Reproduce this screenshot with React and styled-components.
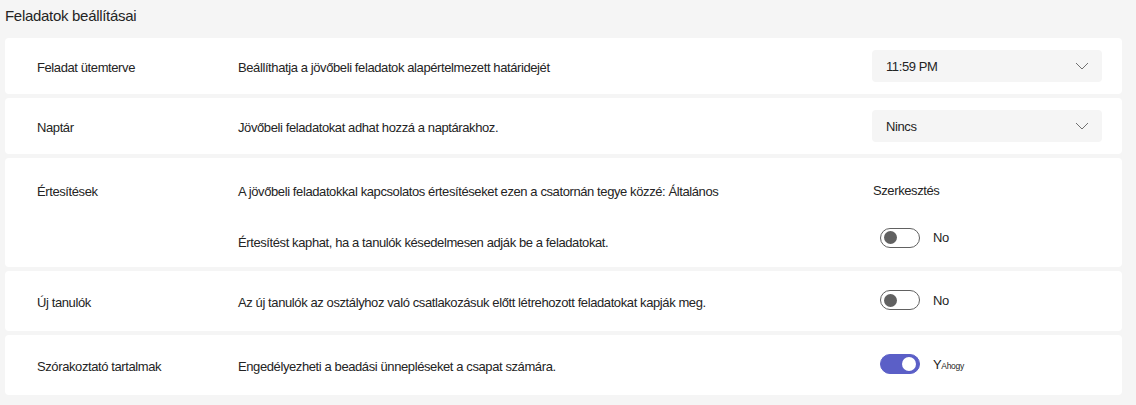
import React from 'react'
import styled, { createGlobalStyle } from 'styled-components'

const settings = [
  {
    label: 'Feladat ütemterve',
    rows: [{ text: 'Beállíthatja a jövőbeli feladatok alapértelmezett határidejét', control: { type: 'select', value: '11:59 PM' } }],
    height: 56,
  },
  {
    label: 'Naptár',
    rows: [{ text: 'Jövőbeli feladatokat adhat hozzá a naptárakhoz.', control: { type: 'select', value: 'Nincs' } }],
    height: 56,
  },
  {
    label: 'Értesítések',
    rows: [
      { text: 'A jövőbeli feladatokkal kapcsolatos értesítéseket ezen a csatornán tegye közzé: Általános', control: { type: 'link', value: 'Szerkesztés' } },
      { text: 'Értesítést kaphat, ha a tanulók késedelmesen adják be a feladatokat.', control: { type: 'toggle', on: false }, lift: 4 },
    ],
    height: 51,
    padTop: 7,
  },
  {
    label: 'Új tanulók',
    rows: [{ text: 'Az új tanulók az osztályhoz való csatlakozásuk előtt létrehozott feladatokat kapják meg.', control: { type: 'toggle', on: false }, lift: 1 }],
    height: 60,
  },
  {
    label: 'Szórakoztató tartalmak',
    rows: [{ text: 'Engedélyezheti a beadási ünnepléseket a csapat számára.', control: { type: 'toggle', on: true }, lift: 1 }],
    height: 60,
  },
]

function App() {
  return (
    <>
      <GlobalStyle />
      <Page>
        <Title>Feladatok beállításai</Title>
        <List>
          {settings.map((s) => (
            <Card key={s.label} $padTop={s.padTop}>
              {s.rows.map((row, i) => (
                <Row key={i} $height={s.height}>
                  <Label>{i === 0 ? s.label : ''}</Label>
                  <Description>{row.text}</Description>
                  <ControlCell $lift={row.lift}>
                    <Control {...row.control} />
                  </ControlCell>
                </Row>
              ))}
            </Card>
          ))}
        </List>
      </Page>
    </>
  )
}

///////////////////////////////////////////////////////////////////////////////////

function Control({ type, value, on }) {
  if (type === 'select') {
    return (
      <Select>
        <span>{value}</span>
        <Chevron width="14" height="8" viewBox="0 0 14 8" aria-hidden="true">
          <polyline points="1,1 7,7 13,1" fill="none" stroke="#707070" strokeWidth="1" />
        </Chevron>
      </Select>
    )
  }
  if (type === 'link') return <LinkText>{value}</LinkText>
  return (
    <ToggleWrap>
      <Track $on={on}>
        <Knob $on={on} />
      </Track>
      {on ? (
        <StateText>
          Y<Small>Ahogy</Small>
        </StateText>
      ) : (
        <StateText>No</StateText>
      )}
    </ToggleWrap>
  )
}

///////////////////////////////////////////////////////////////////////////////////

const GlobalStyle = createGlobalStyle`
  body {
    margin: 0;
    background: #f5f5f5;
    font-family: "Liberation Sans", Arial, sans-serif;
    color: #242424;
  }
`

const Page = styled.div`
  width: 1136px;
  height: 405px;
  box-sizing: border-box;
  padding: 5px 14px 0 5px;
  background: #f5f5f5;
`

const Title = styled.h1`
  margin: 0;
  height: 33px;
  font-size: 15px;
  font-weight: 400;
  letter-spacing: -0.3px;
  line-height: 22px;
  color: #242424;
`

const List = styled.div`
  display: flex;
  flex-direction: column;
  gap: 4px;
`

const Card = styled.div`
  display: flex;
  flex-direction: column;
  background: #ffffff;
  border-radius: 4px;
  padding-top: ${(p) => p.$padTop || 0}px;
`

const Row = styled.div`
  display: grid;
  grid-template-columns: 201px 1fr 230px;
  align-items: center;
  height: ${(p) => p.$height}px;
  padding: 0 20px 0 32px;
  font-size: 13px;
  letter-spacing: -0.4px;
`

const Label = styled.div`
  padding-top: 2px;
`

const Description = styled.div`
  padding-top: 2px;
`

const ControlCell = styled.div`
  display: flex;
  align-items: center;
  margin-bottom: ${(p) => (p.$lift || 0) * 2}px;
`

const Select = styled.div`
  display: flex;
  align-items: center;
  justify-content: space-between;
  width: 100%;
  height: 32px;
  box-sizing: border-box;
  padding: 0 13px 0 14px;
  background: #f5f5f5;
  border-radius: 4px;
  font-size: 13px;
`

const Chevron = styled.svg`
  display: block;
`

const LinkText = styled.span`
  padding-left: 1px;
`

const ToggleWrap = styled.div`
  display: flex;
  align-items: center;
  gap: 13px;
  padding-left: 8px;
`

const Track = styled.div`
  position: relative;
  width: 40px;
  height: 20px;
  box-sizing: border-box;
  border-radius: 10px;
  border: 1px solid ${(p) => (p.$on ? '#5b5fc7' : '#616161')};
  background: ${(p) => (p.$on ? '#5b5fc7' : '#ffffff')};
`

const Knob = styled.div`
  position: absolute;
  top: ${(p) => (p.$on ? '2px' : '2.5px')};
  left: ${(p) => (p.$on ? '21px' : '3px')};
  width: ${(p) => (p.$on ? '14px' : '13px')};
  height: ${(p) => (p.$on ? '14px' : '13px')};
  border-radius: 50%;
  background: ${(p) => (p.$on ? '#ffffff' : '#616161')};
`

const StateText = styled.span`
  font-size: 13px;
`

const Small = styled.span`
  font-size: 8.5px;
  letter-spacing: -0.3px;
`

export default App
